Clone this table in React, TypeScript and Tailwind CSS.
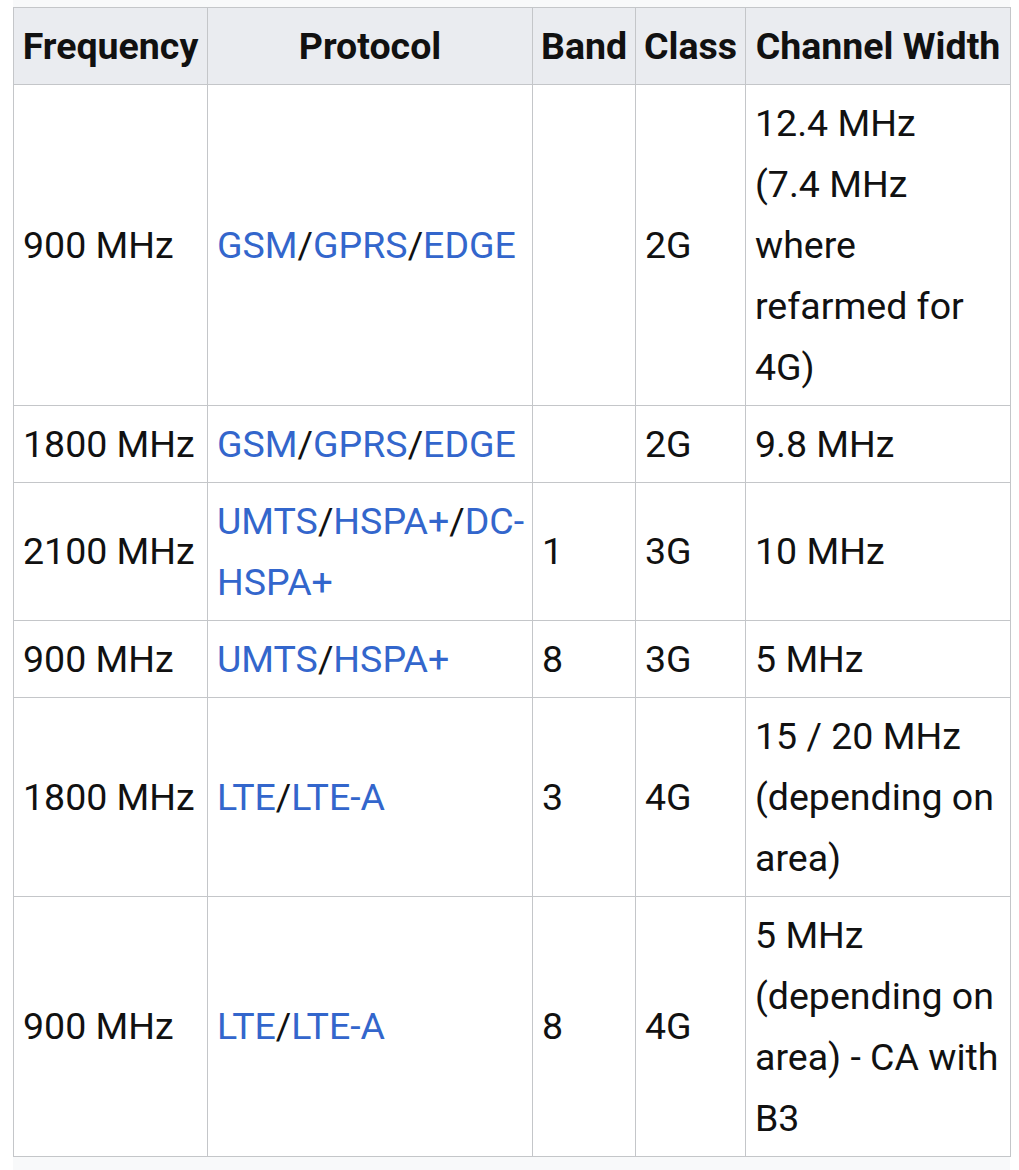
import React from "react";

const L = ({ children }: { children: React.ReactNode }) => (
  <span className="text-[#3366cc]">{children}</span>
);

const td = "border border-[#c4c6c9] pl-[9px] pr-[8px] py-[7.5px] align-middle whitespace-nowrap";
const th = "border border-[#c4c6c9] px-[8px] py-[7.5px] align-middle bg-[#eaecf0] font-bold text-center whitespace-nowrap";

export default function App() {
  const rows: React.ReactNode[][] = [
    [
      "900 MHz",
      <>
        <L>GSM</L>/<L>GPRS</L>/<L>EDGE</L>
      </>,
      "",
      "2G",
      <>
        12.4 MHz
        <br />
        (7.4 MHz
        <br />
        where
        <br />
        refarmed for
        <br />
        4G)
      </>,
    ],
    [
      "1800 MHz",
      <>
        <L>GSM</L>/<L>GPRS</L>/<L>EDGE</L>
      </>,
      "",
      "2G",
      "9.8 MHz",
    ],
    [
      "2100 MHz",
      <>
        <L>UMTS</L>/<L>HSPA+</L>/<L>DC-</L>
        <br />
        <L>HSPA+</L>
      </>,
      "1",
      "3G",
      "10 MHz",
    ],
    [
      "900 MHz",
      <>
        <L>UMTS</L>/<L>HSPA+</L>
      </>,
      "8",
      "3G",
      "5 MHz",
    ],
    [
      "1800 MHz",
      <>
        <L>LTE</L>/<L>LTE-A</L>
      </>,
      "3",
      "4G",
      <>
        15 / 20 MHz
        <br />
        (depending on
        <br />
        area)
      </>,
    ],
    [
      "900 MHz",
      <>
        <L>LTE</L>/<L>LTE-A</L>
      </>,
      "8",
      "4G",
      <>
        5 MHz
        <br />
        (depending on
        <br />
        area) - CA with
        <br />
        B3
      </>,
    ],
  ];

  return (
    <div
      className="min-h-[1170px] bg-white pl-[13px]"
      style={{ fontFamily: "Roboto, 'Noto Sans', sans-serif" }}
    >
      <div className="w-[997px] bg-[#f8f9fa] pt-[7px] min-h-[1170px]">
        <table className="table-fixed border-collapse bg-white text-[37.5px] leading-[61px] text-[#111] w-[997px]">
          <colgroup>
            <col className="w-[194px]" />
            <col className="w-[325px]" />
            <col className="w-[103px]" />
            <col className="w-[110px]" />
            <col className="w-[265px]" />
          </colgroup>
          <thead>
            <tr>
              <th className={th}>Frequency</th>
              <th className={th}>Protocol</th>
              <th className={th}>Band</th>
              <th className={th}>Class</th>
              <th className={th}>Channel Width</th>
            </tr>
          </thead>
          <tbody>
            {rows.map((r, i) => (
              <tr key={i}>
                {r.map((c, j) => (
                  <td key={j} className={td}>
                    {c}
                  </td>
                ))}
              </tr>
            ))}
          </tbody>
        </table>
      </div>
    </div>
  );
}
